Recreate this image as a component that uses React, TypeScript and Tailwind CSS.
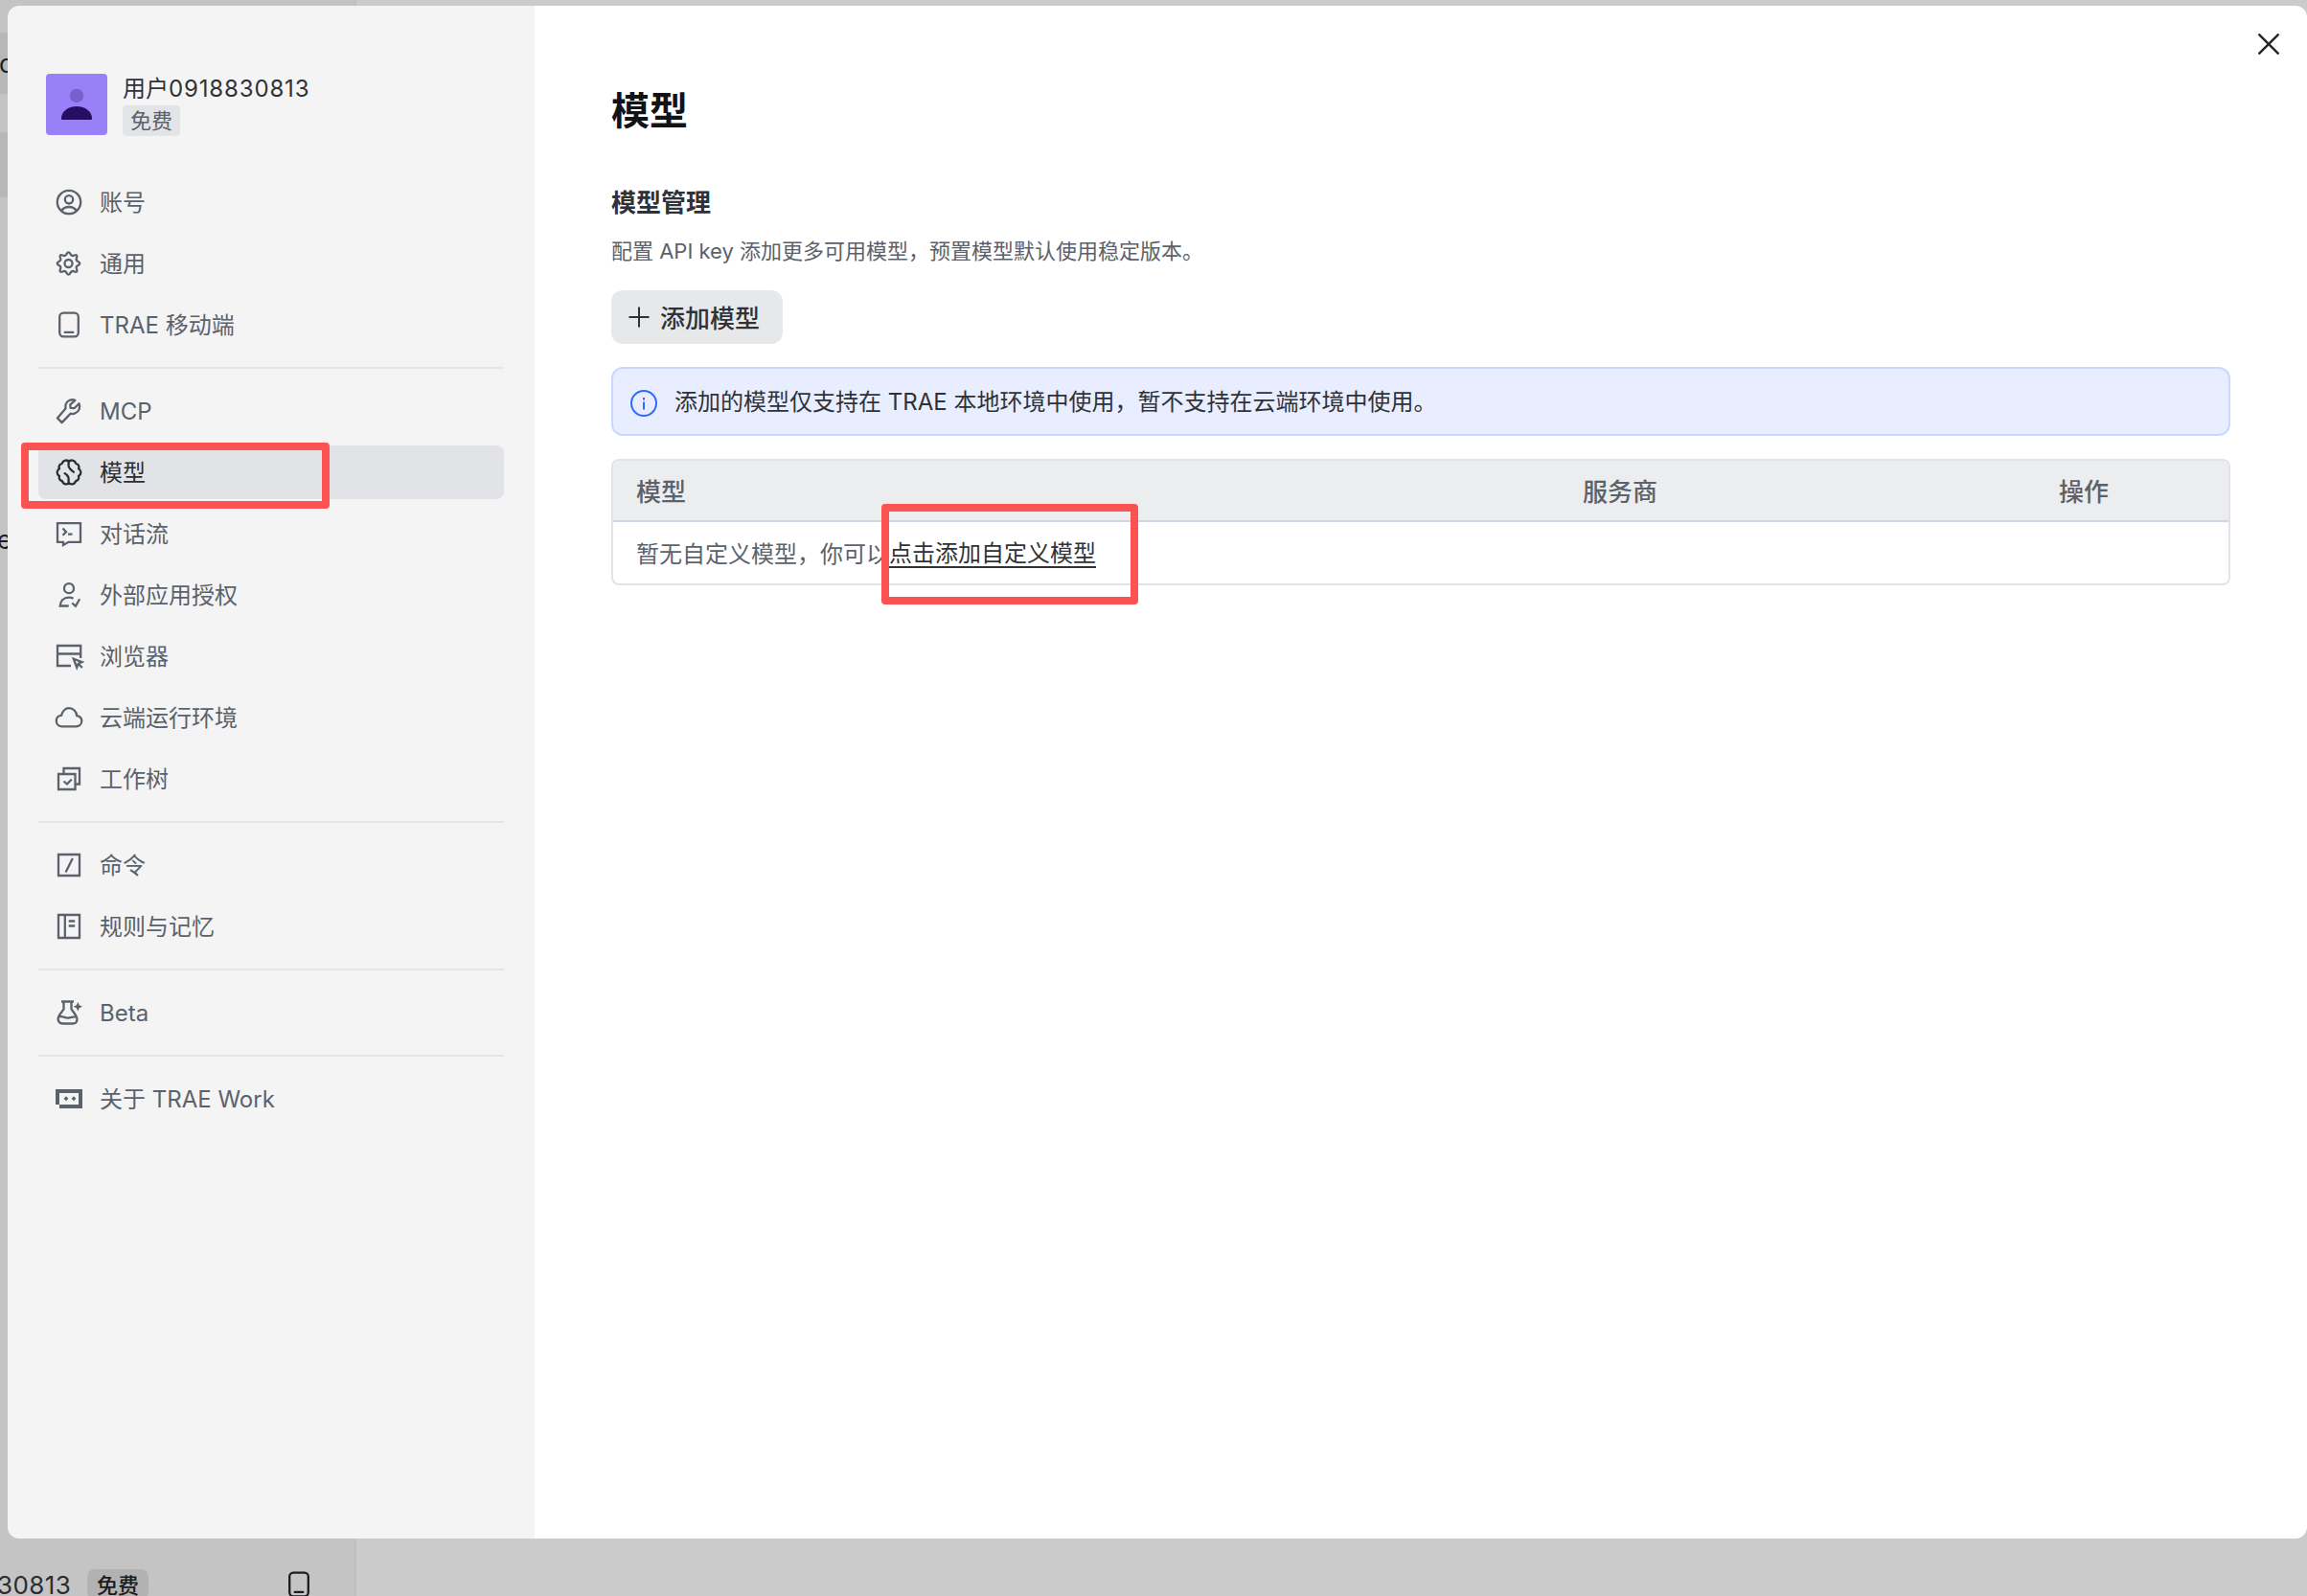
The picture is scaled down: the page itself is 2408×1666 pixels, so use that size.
import React from 'react';
import clsx from 'clsx';

interface MenuEntry {
  label: string;
  icon: React.ReactNode;
}

const Icon: React.FC<{ children: React.ReactNode; className?: string }> = ({ children, className }) => (
  <svg
    viewBox="0 0 32 32"
    className={clsx('h-8 w-8 shrink-0', className)}
    fill="none"
    stroke="currentColor"
    strokeWidth="2.3"
  >
    {children}
  </svg>
);

const PhoneIcon: React.FC<{ className?: string }> = ({ className }) => (
  <Icon className={className}>
    <rect x="6.2" y="3.7" width="19.6" height="24.6" rx="4" />
    <path d="M11.7 23.900h8.600" strokeLinecap="round" />
  </Icon>
);

const menuGroups: MenuEntry[][] = [
  [
    {
      label: '账号',
      icon: (
        <Icon>
          <circle cx="16" cy="16" r="12.2" />
          <circle cx="16" cy="13.3" r="4.2" />
          <path d="M8.3 25c1.6-2.8 4.4-4 7.7-4s6.1 1.2 7.7 4" />
        </Icon>
      ),
    },
    {
      label: '通用',
      icon: (
        <Icon>
          <path
            d="M15.5 4.300c1.800 0 2 3 3.700 3.600s3.600-1.700 4.900-.4-1 3.200-.4 4.900 3.600 1.800 3.600 3.600-3 2-3.600 3.600 1.700 3.600.4 4.900-3.200-1-4.900-.4-1.900 3.600-3.700 3.600-2-3-3.700-3.600-3.600 1.700-4.900.4 1-3.200.4-4.900-3.600-1.800-3.600-3.600 3-2 3.600-3.600-1.700-3.600-.4-4.900 3.200 1 4.900.4 1.900-3.600 3.700-3.600z"
            strokeLinejoin="round"
          />
          <circle cx="15.5" cy="16" r="4" />
        </Icon>
      ),
    },
    { label: 'TRAE 移动端', icon: <PhoneIcon /> },
  ],
  [
    {
      label: 'MCP',
      icon: (
        <Icon>
          <path
            d="M22.4 4.800c-3.800-1.500-8.100.2-9.600 3.800-.6 1.500-.7 3.100-.2 4.600L3.900 23.400l4.700 4.700 9-9.400c1.500.5 3.400.4 5-.4 4-1.800 5.600-6 3.900-10l-5 4.900-3.900-.3-.3-3.500z"
            strokeLinejoin="round"
          />
        </Icon>
      ),
    },
    {
      label: '模型',
      icon: (
        <Icon>
          <path
            d="M16 4.800C14.800 3 10 2.600 8.800 6.800 5.800 7.400 5 10 6 12.200c-3.200 1.800-3.200 5.800 0 7.800-.8 2.600.4 4.800 3 5.200C10 29 14.800 29 16 27.200c1.200 1.800 6 1.800 7-2 2.600-.4 3.800-2.600 3-5.200 3.200-2 3.200-6 0-7.800 1-2.200.2-4.800-2.800-5.400C22 2.600 17.200 3 16 4.800z"
            strokeLinejoin="round"
          />
          <path d="M15.600 5v4.300c0 2.800 2.400 3.200 2.900 4.600l2.300 1.800M15.600 27v-4.300c0-2.600-1.600-3-1.900-4.100l-2.100-1.500" strokeLinecap="round" />
        </Icon>
      ),
    },
    {
      label: '对话流',
      icon: (
        <Icon>
          <path d="M4 5.2h24v19.600H15.500L10 28v-3.200H4z" />
          <path d="M9.500 10.5l3.500 3.700-3.500 3.500M15 16.700h4.500" />
        </Icon>
      ),
    },
    {
      label: '外部应用授权',
      icon: (
        <Icon>
          <circle cx="16" cy="9.2" r="5" />
          <path d="M20.500 19.700c-1.300-.7-2.800-1-4.500-1-5.500 0-9 3.400-9.300 8.800h9M19.200 24.500l3.700 3.200 4.300-7.500" />
        </Icon>
      ),
    },
    {
      label: '浏览器',
      icon: (
        <Icon>
          <path d="M18 26H4V5h24.200v13M4 13.500h24" />
          <path d="M20.800 18.800l8.600 3.300-3.700 1.700-1.500 3.900zM25.500 23.500l4.300 4.500" />
        </Icon>
      ),
    },
    {
      label: '云端运行环境',
      icon: (
        <Icon>
          <path d="M9 25.400c-3.700 0-6.200-2.600-6.200-5.900s2.300-5.700 5.400-5.900C9.200 9.500 12.300 6.200 16 6.200c4.500 0 7.800 3.400 8.200 7.900 3 .5 5.100 2.600 5.100 5.500 0 3.300-2.600 5.800-6.100 5.800z" />
        </Icon>
      ),
    },
    {
      label: '工作树',
      icon: (
        <Icon>
          <path d="M5 11h17.500v16H5zM10.500 11V5H27v16.500h-4.500M10.500 18.500l3.500 3 4.800-5" />
        </Icon>
      ),
    },
  ],
  [
    {
      label: '命令',
      icon: (
        <Icon>
          <path d="M5 5h22v22H5zM19.800 9l-7.200 14.500" />
        </Icon>
      ),
    },
    {
      label: '规则与记忆',
      icon: (
        <Icon>
          <path d="M5 4h22v24H5zM11.800 4v24M15.700 10.500h6.500M15.700 15.500h6.500" />
        </Icon>
      ),
    },
  ],
  [
    {
      label: 'Beta',
      icon: (
        <Icon>
          <path d="M8 4.500h13M10.500 4.500v8L5.800 19c-2.600 4.200-.6 8.500 3.700 8.500h10.700c4.300 0 5.500-4.500 3-8.500l-4.700-6.500v-8M5.500 20.500c4.500-1.500 6.500 1.800 10 1 3-.6 5-1.500 8-1" />
          <path d="M25.300 5l1.500 3.200 3.200 1.500-3.200 1.500-1.500 3.200-1.500-3.200-3.200-1.500 3.200-1.500z" fill="currentColor" stroke="none" />
        </Icon>
      ),
    },
  ],
  [
    {
      label: '关于 TRAE Work',
      icon: (
        <Icon>
          <path
            d="M2 6h28v20H6v-4H2zM6 10v12h20V10z"
            fill="currentColor"
            fillRule="evenodd"
            stroke="none"
          />
          <path d="M13 13.200l2.400 2.500-2.400 2.500-2.400-2.500zM21 13.200l2.400 2.500-2.400 2.500-2.400-2.500z" fill="currentColor" stroke="none" />
        </Icon>
      ),
    },
  ],
];

const activeLabel = '模型';

// Dimmed app window behind the settings dialog
const Backdrop: React.FC = () => (
  <div className="absolute inset-0 flex bg-[#cbcbcb]">
    <div className="flex w-[372px] flex-col border-r-2 border-[#bfbfbf] bg-[#c4c4c4]">
      <div className="mt-[34px] flex h-16 items-center bg-[#b7b7b7] text-[26px] text-[#1b1c1f]">
        <span className="-ml-px">c</span>
      </div>
      <div className="mt-10 h-[68px] bg-[#b7b7b7]" />
      <div className="mt-[338px] h-10 text-[26px] leading-10 text-[#1b1c1f]">
        <span className="-ml-[3px]">e</span>
      </div>
      <div className="mt-auto flex h-7 items-start">
        <span className="-ml-[3px] w-[94px] pt-px text-[26px] leading-8 tracking-[0.4px] text-[#2b2d31]">30813</span>
        <span className="h-8 rounded-lg bg-[#b2b2b2] px-[10px] pt-px text-[22px] font-medium leading-8 text-[#1b1c1f]">免费</span>
        <PhoneIcon className="ml-auto mr-[42px] text-[#1b1c1f]" />
      </div>
    </div>
  </div>
);

const Sidebar: React.FC = () => (
  <aside className="flex w-[550px] shrink-0 flex-col bg-[#f4f4f4] px-8 pt-[71px]">
    <div className="flex gap-4 pl-2">
      <svg viewBox="0 0 64 64" className="h-16 w-16 rounded">
        <rect width="64" height="64" fill="#9780f8" />
        <circle cx="32" cy="23" r="7.2" fill="#785fcb" />
        <path d="M16 46.500C16 39.500 23 34 32 34s16 5.500 16 12.500q0 1.500-1 1.500H17q-1 0-1-1.500z" fill="#260f63" />
      </svg>
      <div className="flex flex-col items-start">
        <span className="h-[33px] text-2xl leading-[31px] text-[#2f3237]">
          用户<span className="tracking-[0.85px]">0918830813</span>
        </span>
        <span className="h-8 rounded bg-[#e3e4e8] px-2 text-[22px] leading-8 text-[#5b626b]">免费</span>
      </div>
    </div>

    <nav className="mt-[41px] flex flex-col">
      {menuGroups.map((group, i) => (
        <div
          key={i}
          className={clsx('flex flex-col gap-2', i > 0 && 'mt-4 border-t-2 border-[#e2e6ea] pt-4')}
        >
          {group.map((item) => (
            <button
              key={item.label}
              className={clsx(
                'flex h-14 items-center gap-4 rounded-lg px-4 text-2xl',
                item.label === activeLabel ? 'bg-[#e2e3e7] text-[#2b2d31]' : 'text-[#5b626b]',
              )}
            >
              {item.icon}
              <span className="pt-0.5">{item.label}</span>
            </button>
          ))}
        </div>
      ))}
    </nav>
  </aside>
);

const ModelSettings: React.FC = () => (
  <main className="flex flex-1 flex-col items-start bg-white px-20 pt-20">
    <h1 className="text-[40px] font-semibold leading-[60px] text-[#121315]">模型</h1>
    <h2 className="mt-[46px] text-[26px] font-semibold leading-10 text-[#2f3237]">模型管理</h2>
    <p className="mt-3.5 text-[22px] leading-8 text-[#5b626b]">
      配置 API key 添加更多可用模型，预置模型默认使用稳定版本。
    </p>

    <button className="mt-[25px] flex h-14 w-[179px] items-center rounded-xl bg-[#e7e8ea] pl-[18px] text-[26px] font-medium text-[#2f3237]">
      <svg viewBox="0 0 22 22" className="mr-[11px] h-[22px] w-[22px]" stroke="currentColor" strokeWidth="2">
        <path d="M11 .5v21M.5 11h21" />
      </svg>
      <span className="pt-0.5">添加模型</span>
    </button>

    <div className="mt-6 flex h-[72px] w-full items-center rounded-xl border-2 border-[#cad7fe] bg-[#e8eeff] pl-[18px] text-2xl text-[#2f3237]">
      <svg viewBox="0 0 28 28" className="mr-[18px] mt-1 h-7 w-7" fill="none" stroke="#2f6bff" strokeWidth="2">
        <circle cx="14" cy="14" r="13" />
        <path d="M14 12.5v8M14 8v2.500" />
      </svg>
      <span className="pt-0.5">添加的模型仅支持在 TRAE 本地环境中使用，暂不支持在云端环境中使用。</span>
    </div>

    <div className="mt-6 w-full overflow-hidden rounded-lg border-2 border-[#dfe3ea] text-[26px] text-[#5b626b]">
      <div className="flex h-16 items-center border-b-2 border-[#cfd6e3] bg-[#ecedef] pl-6 pt-[3px] font-medium">
        <div className="w-[988px]">模型</div>
        <div className="w-[497px]">服务商</div>
        <div>操作</div>
      </div>
      <div className="flex h-16 items-center pl-6 pt-[3px] text-2xl">
        暂无自定义模型，你可以
        <a className="border-b-2 border-[#2f3237] leading-[26px] text-[#2f3237]">点击添加自定义模型</a>
      </div>
    </div>
  </main>
);

export default function App() {
  return (
    <div
      lang="zh-CN"
      className="relative h-[1666px] w-[2408px] overflow-hidden font-['Inter','Noto_Sans_CJK_SC',sans-serif]"
    >
      <Backdrop />
      <div className="relative ml-2 mt-1.5 flex h-[1600px] w-[2400px] overflow-hidden rounded-xl">
        <Sidebar />
        <ModelSettings />
        <button className="absolute right-[29px] top-[29px] text-[#26282b]">
          <svg viewBox="0 0 22 22" className="h-[22px] w-[22px]" stroke="currentColor" strokeWidth="2.5" strokeLinecap="round">
            <path d="M1.300 1.300l19.400 19.400M20.700 1.300L1.300 20.700" />
          </svg>
        </button>
      </div>

      {/* Highlight frames */}
      <div className="absolute left-[22px] top-[462px] h-[69px] w-[322px] rounded border-8 border-[#fb5252]" />
      <div className="absolute left-[920px] top-[526px] h-[105px] w-[268px] rounded border-8 border-[#fb5252]" />
    </div>
  );
}
